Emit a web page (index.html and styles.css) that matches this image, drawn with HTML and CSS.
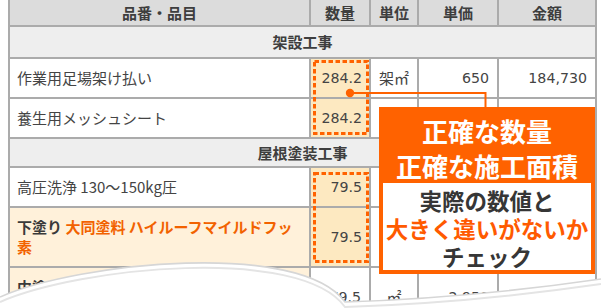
FILE: index.html
```html
<!DOCTYPE html>
<html lang="ja">
<head>
<meta charset="utf-8">
<title>見積書チェック</title>
<link rel="stylesheet" href="styles.css">
</head>
<body>
<div class="wrap">
  <table class="est">
    <colgroup>
      <col class="c1"><col class="c2"><col class="c3"><col class="c4"><col class="c5">
    </colgroup>
    <thead>
      <tr><th>品番・品目</th><th>数量</th><th>単位</th><th>単価</th><th>金額</th></tr>
    </thead>
    <tbody>
      <tr class="sec"><td colspan="5">架設工事</td></tr>
      <tr><td class="item">作業用足場架け払い</td><td class="num qty">284.2</td><td class="unit">架㎡</td><td class="num">650</td><td class="num">184,730</td></tr>
      <tr><td class="item">養生用メッシュシート</td><td class="num qty">284.2</td><td class="unit">架㎡</td><td class="num">150</td><td class="num">42,630</td></tr>
      <tr class="sec sec-tight"><td colspan="5">屋根塗装工事</td></tr>
      <tr><td class="item">高圧洗浄 130〜150kg圧</td><td class="num qty">79.5</td><td class="unit">㎡</td><td class="num">250</td><td class="num">19,875</td></tr>
      <tr class="paint"><td class="item"><b>下塗り</b> <b class="brand">大同塗料 ハイルーフマイルドフッ素</b></td><td class="num qty">79.5</td><td class="unit">㎡</td><td class="num">950</td><td class="num">75,525</td></tr>
      <tr class="paint"><td class="item"><b>中塗り</b> <b class="brand">大同塗料 ハイルーフマイルドフッ素</b></td><td class="num">79.5</td><td class="unit">㎡</td><td class="num">2,950</td><td class="num">234,525</td></tr>
    </tbody>
  </table>

  <svg class="marks" width="601" height="308" viewBox="0 0 601 308">
    <rect x="314.5" y="61.5" width="53" height="72" fill="none" stroke="#ff6200" stroke-width="3" stroke-dasharray="4.5 2.5"/>
    <rect x="314.5" y="173.5" width="53" height="88" fill="none" stroke="#ff6200" stroke-width="3" stroke-dasharray="4.5 2.5"/>
    <path d="M350 93 H485.5 V108" fill="none" stroke="#ff6200" stroke-width="2"/>
    <circle cx="350" cy="93" r="4.2" fill="#ff6200"/>
  </svg>

  <div class="callout">
    <div class="callout-head">正確な数量<br>正確な施工面積</div>
    <div class="callout-body">実際の数値と<br><span class="accent">大きく違いがないか</span><br>チェック</div>
  </div>

  <svg class="curl" width="601" height="58" viewBox="0 250 601 58">
    <path d="M0 297 C80 262 300 240 345 302 Q470 298 601 279 L601 308 L0 308 Z" fill="#ffffff"/>
    <path d="M0 297 C80 262 300 240 345 302 Q470 298 601 279" fill="none" stroke="#d6d6d6" stroke-width="1.6"/>
    <path d="M0 302 C80 267 300 245 345 307 Q470 303 601 284" fill="none" stroke="#e4e4e4" stroke-width="2"/>
  </svg>
</div>
</body>
</html>
```
FILE: styles.css
```css
html, body {
  margin: 0;
  padding: 0;
  background: #ffffff;
  overflow: hidden;
}

.wrap {
  position: relative;
  width: 601px;
  height: 308px;
  overflow: hidden;
}

.est {
  border-collapse: separate;
  border-spacing: 0;
  table-layout: fixed;
  width: 589px;
  margin-left: 8px;
  border-left: 2px solid #ababab;
  font-family: "Noto Sans CJK JP", sans-serif;
  font-size: 15px;
  color: #444444;
}

.c1 { width: 301px; }
.c2 { width: 60px; }
.c3 { width: 48px; }
.c4 { width: 80px; }
.c5 { width: 98px; }

.est th,
.est td {
  box-sizing: border-box;
  border-right: 2px solid #ababab;
  border-bottom: 2px solid #ababab;
  line-height: 20px;
  vertical-align: middle;
  white-space: nowrap;
}

.est th {
  background: #dcdcdc;
  padding: 3px 0 2px;
  font-weight: 700;
  color: #3e3e3e;
  text-align: center;
}

.est .sec td {
  background: #eeeeee;
  padding: 5px 0;
  font-weight: 700;
  color: #3e3e3e;
  text-align: center;
}

.est .sec-tight td {
  padding: 4px 0 3px;
}

.est td {
  padding: 9px 8px;
}

.est td.item {
  padding: 9px 8px 9px 7px;
  white-space: normal;
}

.est td.num {
  font-family: "DejaVu Sans", sans-serif;
  font-size: 14.2px;
  text-align: right;
  padding-right: 8px;
}

.est td.qty {
  background: #fde9c1;
  padding-right: 7px;
}

.est td.unit {
  text-align: center;
  padding: 9px 0;
}

.paint td.item {
  background: #fff1da;
}

.paint b {
  font-weight: 700;
  color: #3a3a3a;
}

.paint b.brand {
  color: #f26200;
}

.marks {
  position: absolute;
  left: 0;
  top: 0;
}

.callout {
  position: absolute;
  left: 379px;
  top: 107px;
  width: 216px;
  box-sizing: border-box;
  background: #ff6200;
  padding: 0 4px 4px;
  font-family: "Noto Sans CJK JP", sans-serif;
  font-weight: 700;
  text-align: center;
  white-space: nowrap;
}

.callout-head {
  padding-top: 6px;
  font-size: 26px;
  line-height: 35px;
  color: #ffffff;
}

.callout-body {
  background: #ffffff;
  padding-top: 3px;
  font-size: 22.5px;
  line-height: 28px;
  color: #363636;
}

.callout-body .accent {
  color: #ff5a00;
}

.curl {
  position: absolute;
  left: 0;
  bottom: 0;
}
```
